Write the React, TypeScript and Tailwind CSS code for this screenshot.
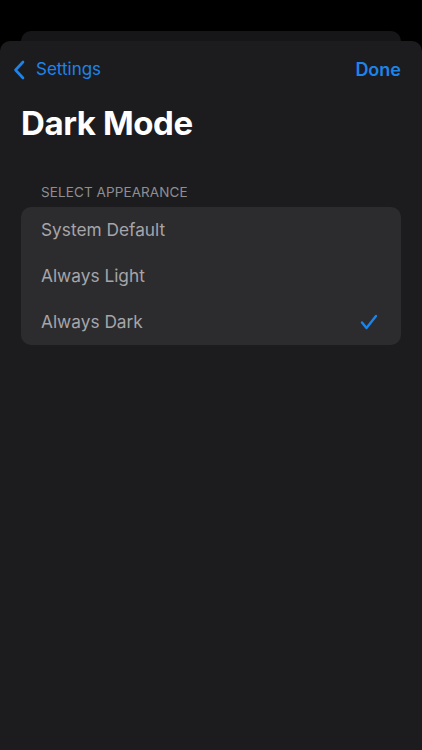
import React from "react";

export default function App() {
  const font = { fontFamily: "Inter, 'Noto Sans', 'Liberation Sans', sans-serif" };
  return (
    <div className="w-[422px] h-[750px] bg-black overflow-hidden flex flex-col" style={font}>
      <div className="h-[31px] shrink-0" />
      <div className="mx-[21px] h-[10px] shrink-0 rounded-t-[10px] bg-[#161618]" />
      <div className="flex-1 bg-[#1c1c1e] rounded-t-[10px] flex flex-col">
        <div className="h-[56px] flex items-center justify-between pl-[13px] pr-[21px] pt-[1px]">
          <div className="flex items-center gap-[11px] text-[#1d84ea]">
            <svg width="12" height="20" viewBox="0 0 12 20" fill="none">
              <path d="M10 2 L2.5 10 L10 18" stroke="#1d84ea" strokeWidth="2.6" strokeLinecap="round" strokeLinejoin="round" />
            </svg>
            <span className="text-[17px] leading-none">Settings</span>
          </div>
          <span className="text-[18px] font-semibold text-[#1d84ea] leading-none">Done</span>
        </div>
        <div className="px-[21px] pt-[6px] h-[52px]">
          <h1 className="text-[33px] font-bold text-white leading-[40px] tracking-[-0.4px]">Dark Mode</h1>
        </div>
        <div className="px-[41px] mt-[30px] h-[28px]">
          <span className="text-[13.5px] text-[#8e8e93] uppercase tracking-[0.1px] leading-[18px]">Select Appearance</span>
        </div>
        <div className="mx-[21px] rounded-[10px] bg-[#2c2c2e] flex flex-col">
          {["System Default", "Always Light", "Always Dark"].map((label, i) => (
            <div key={label} className="h-[46px] flex items-center justify-between pl-[20px] pr-[23px]">
              <span className="text-[17.3px] text-[#a5a5aa]">{label}</span>
              {i === 2 && (
                <svg width="18" height="16" viewBox="0 0 18 16" fill="none">
                  <path d="M2 8.5 L6.5 14 L16 2" stroke="#1d84ea" strokeWidth="2.4" strokeLinecap="round" strokeLinejoin="round" />
                </svg>
              )}
            </div>
          ))}
        </div>
      </div>
    </div>
  );
}
